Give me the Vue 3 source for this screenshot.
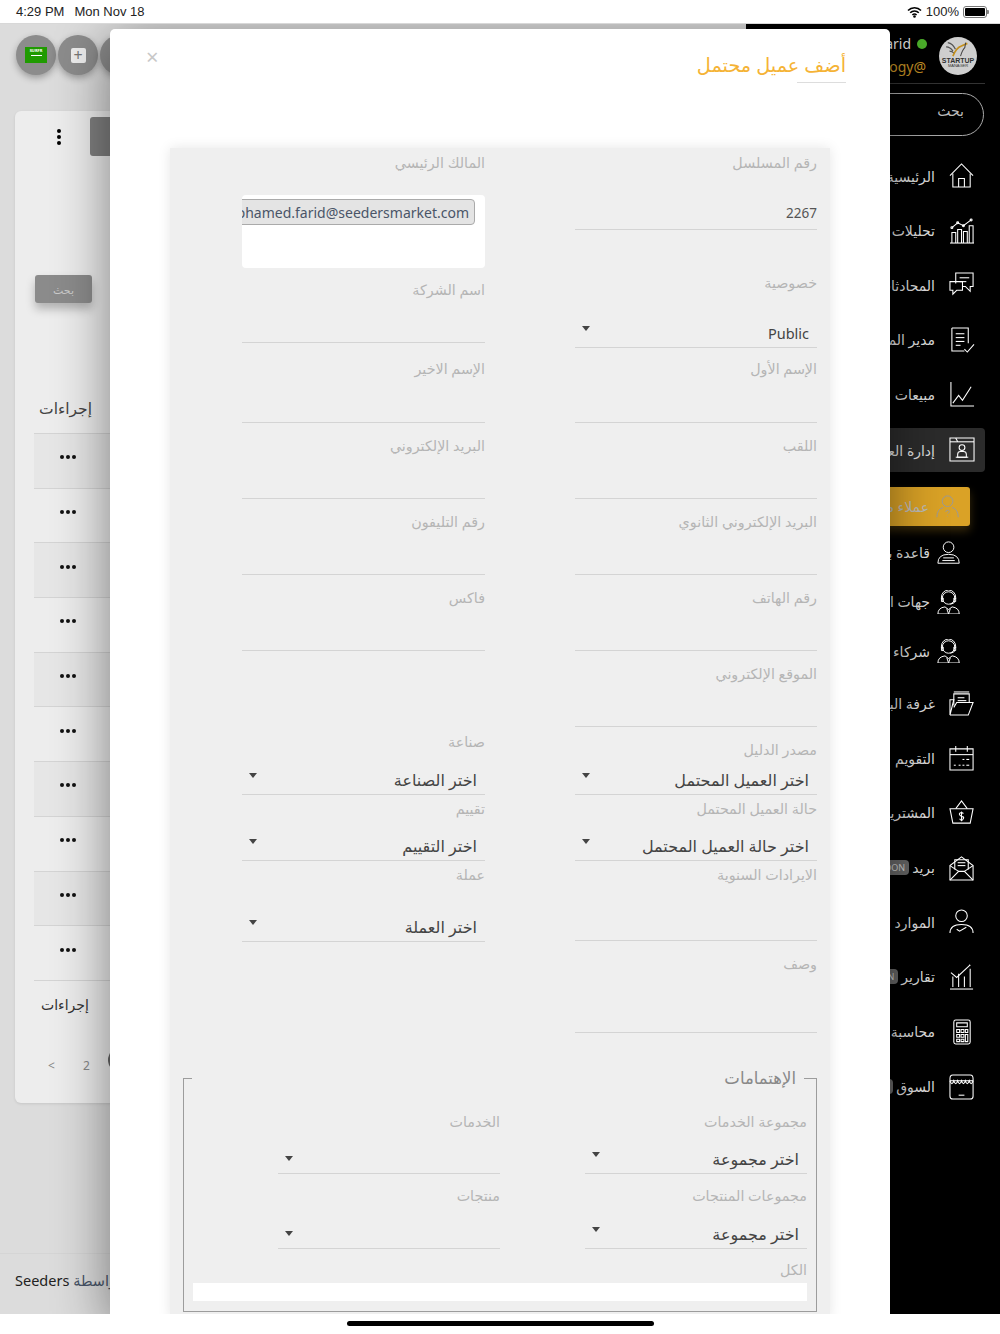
<script setup>
const icons = {
  home: ['M1 13 13 1l12 12', 'M4 11v14h18V11', 'M10 25v-9h6v9'],
  analytics: ['M1 26h25', 'M3 26V15h4v11', 'M9 26V12h4v14', 'M15 26V14h4v12', 'M21 26V8h4v18', 'M3 10l6-5 6 3 8-6', 'M4 10a1 1 0 1 1-2 0a1 1 0 1 1 2 0', 'M10 5a1 1 0 1 1-2 0a1 1 0 1 1 2 0', 'M16 8a1 1 0 1 1-2 0a1 1 0 1 1 2 0', 'M24 2a1 1 0 1 1-2 0a1 1 0 1 1 2 0'],
  chat: ['M7 12V1h18v14h-3v5l-5-5h-3', 'M11 6h10', 'M11 10h7', 'M1 10h13v9H8l-4 4v-4H1z'],
  doc: ['M3 1h17v16', 'M3 1v24h13', 'M7 7h9', 'M7 11h9', 'M7 15h9', 'M7 19h5', 'M16 23l3 3 7-8'],
  chart: ['M2 0v25h24', 'M4 22l6-8 4 5 9-14'],
  crm: ['M1 1h25v24H1z', 'M1 5h25', 'M7 1l2 4', 'M16.500 11a3 3 0 1 1-6 0a3 3 0 1 1 6 0', 'M9 21v-3q0-3 3-3h3q3 0 3 3v3z', 'M7 21h13'],
  personQ: ['M19 7a6 6 0 1 1-12 0a6 6 0 1 1 12 0', 'M1 25q0-9 7-11', 'M25 25q0-9-7-11', 'M11 19q0-2 2-2t2 1.500-2 2.500', 'M13 24v.5'],
  personL: ['M19 7a6 6 0 1 1-12 0a6 6 0 1 1 12 0', 'M1 25q0-10 12-10t12 10z', 'M7 19h12', 'M6 22h14'],
  agent: ['M20 9a7 7 0 1 1-14 0a7 7 0 1 1 14 0', 'M5 10V8a8 8 0 0 1 16 0v2', 'M5 9h2v4H5z', 'M19 9h2v4h-2z', 'M20 13q0 2-5 3', 'M1 27q0-7 8-8l4 3 4-3q8 1 8 8z', 'M11 21l2 6 2-6'],
  folder: ['M5 15V3h16v9', 'M1 25 5 9H1v16', 'M9 7h7', 'M9 10h9', 'M1 25h19l5-13H8l-3 5', 'M5 1h16'],
  calendar: ['M1 4h24v22H1z', 'M1 10h24', 'M7 1v6', 'M19 1v6', 'M14 15h2', 'M18 15h3', 'M5 21h2', 'M10 21h2', 'M14 21h2', 'M18 21h3'],
  basket: ['M1 9h24l-3 15H4z', 'M7 9l6-8 6 8', 'M15 14q-2-1.500-3.500-.5t0 2.500 3 1.500 0 2.500-3.500-.5', 'M13 12v10'],
  mail: ['M1 11v15h24V11L13 2z', 'M6 15V5h14v10', 'M9 8h8', 'M9 11h8', 'M1 26l9-9h6l9 9', 'M1 11l9 6', 'M25 11l-9 6'],
  hr: ['M19 7a6 6 0 1 1-12 0a6 6 0 1 1 12 0', 'M1 25q0-9 12-9t12 9', 'M8 21l3 2 7-4'],
  reports: ['M1 26h24', 'M4 24V13', 'M10 24V10', 'M16 24V13', 'M22 24V5', 'M2 9l6 5 14-13', 'M22 1l-1 .5'],
  calc: ['M7 1h13q2 0 2 2v21q0 2-2 2H7q-2 0-2-2V3q0-2 2-2z', 'M8 4h11v4H8z', 'M8 11h3v3H8z', 'M12.500 11h3v3h-3z', 'M17 11h2.500v3H17z', 'M8 16h3v3H8z', 'M12.500 16h3v3h-3z', 'M8 21h3v2.500H8z', 'M12.500 21h3v2.500h-3z', 'M17 16h2.500v7.500H17z'],
  shop: ['M4 1h18q3 0 3 4v18q0 3-3 3H4q-3 0-3-3V5q0-4 3-4z', 'M1 7h24', 'M1 7q2 6 4 0q2 6 4 0q2 6 4 0q2 6 4 0q2 6 4 0q2 6 4 0', 'M10 22h6']
}
const menu = [
  { t: 'الرئيسية', i: 'home', h: 54 },
  { t: 'تحليلات الأعمال', i: 'analytics', h: 55 },
  { t: 'المحادثات', i: 'chat', h: 54 },
  { t: 'مدير المهام', i: 'doc', h: 55 },
  { t: 'مبيعات', i: 'chart', h: 55 },
  { t: 'إدارة العملاء', i: 'crm', h: 54, active: true },
  { t: 'عملاء محتملين', i: 'personQ', h: 44, sub: true, current: true },
  { t: 'قاعدة بيانات', i: 'personL', h: 49, sub: true },
  { t: 'جهات الاتصال', i: 'agent', h: 49, sub: true },
  { t: 'شركاء', i: 'agent', h: 50, sub: true },
  { t: 'غرفة البيانات', i: 'folder', h: 55 },
  { t: 'التقويم', i: 'calendar', h: 54 },
  { t: 'المشتريات', i: 'basket', h: 55 },
  { t: 'بريد', i: 'mail', h: 55, badge: 'SOON' },
  { t: 'الموارد البشرية', i: 'hr', h: 54 },
  { t: 'تقارير', i: 'reports', h: 55, badge: 'SOON' },
  { t: 'محاسبة', i: 'calc', h: 55 },
  { t: 'السوق', i: 'shop', h: 55, badge: 'SOON' }
]
const rows = Array.from({ length: 10 }, (_, i) => i)
const rightFields = [
  { label: 'رقم المسلسل', value: '2267', latin: true, h: 76, mb: 44 },
  { label: 'خصوصية', value: 'Public', latin: true, select: true, h: 74, mb: 12 },
  { label: 'الإسم الأول', h: 63, mb: 14 },
  { label: 'اللقب', h: 62, mb: 14 },
  { label: 'البريد الإلكتروني الثانوي', h: 62, mb: 14 },
  { label: 'رقم الهاتف', h: 62, mb: 14 },
  { label: 'الموقع الإلكتروني', h: 62, mb: 14 },
  { label: 'مصدر الدليل', value: 'اختر العميل المحتمل', select: true, h: 54, mb: 5 },
  { label: 'حالة العميل المحتمل', value: 'اختر حالة العميل المحتمل', select: true, h: 61, mb: 5 },
  { label: 'الايرادات السنوية', h: 75, mb: 14 },
  { label: 'وصف', h: 78, mb: 0 }
]
const leftFields = [
  { label: 'المالك الرئيسي', owner: true, h: 114, mb: 13 },
  { label: 'اسم الشركة', h: 62, mb: 17 },
  { label: 'الإسم الاخير', h: 63, mb: 14 },
  { label: 'البريد الإلكتروني', h: 62, mb: 14 },
  { label: 'رقم التليفون', h: 62, mb: 14 },
  { label: 'فاكس', h: 62, mb: 82 },
  { label: 'صناعة', value: 'اختر الصناعة', select: true, h: 62, mb: 5 },
  { label: 'تقييم', value: 'اختر التقييم', select: true, h: 61, mb: 5 },
  { label: 'عملة', value: 'اختر العملة', select: true, h: 76, mb: 0 }
]
const innerRight = [
  { label: 'مجموعة الخدمات', value: 'اختر مجموعة', h: 61, mb: 13 },
  { label: 'مجموعات المنتجات', value: 'اختر مجموعة', h: 62, mb: 12 }
]
const innerLeft = [
  { label: 'الخدمات', value: '', h: 61, mb: 13 },
  { label: 'منتجات', value: '', h: 62, mb: 12 }
]
</script>

<template>
  <div class="screen">
    <header class="status">
      <div class="status-left"><span>4:29 PM</span><span>Mon Nov 18</span></div>
      <div class="status-right">
        <svg width="15" height="12" viewBox="0 0 15 12"><path d="M1 4.500a9 9 0 0 1 13 0M3.200 6.800a6 6 0 0 1 8.600 0M5.400 9a3 3 0 0 1 4.200 0" fill="none" stroke="#000" stroke-width="1.600"/><circle cx="7.500" cy="10.500" r="1.300"/></svg>
        <span>100%</span>
        <span class="battery"><i></i></span>
      </div>
    </header>

    <main class="main">
      <section class="page">
        <div class="round-row">
          <div class="round"><span class="flag"><b>SURFR</b><i></i></span></div>
          <div class="round"><span class="plus">+</span></div>
          <div class="round"></div>
        </div>
        <div class="card">
          <div class="card-top">
            <span class="kebab"><i></i><i></i><i></i></span>
            <span class="gray-tab"></span>
          </div>
          <button class="search-btn">بحث</button>
          <div class="th">إجراءات</div>
          <div v-for="r in rows" :key="r" class="row" :class="{ odd: r % 2 === 0 }"><i></i><i></i><i></i></div>
          <div class="tf">إجراءات</div>
          <div class="pager"><span>&lt;</span><span>2</span><span class="page-dot"></span></div>
        </div>
        <footer class="foot"><span class="foot-en">Seeders</span> <span class="foot-ar">بواسطة</span></footer>
      </section>

      <aside class="side">
        <div class="user">
          <div class="user-text">
            <div class="user-name"><span>Mohamed Farid</span><i class="online"></i></div>
            <div class="user-mail">Seeders Technology@</div>
          </div>
          <div class="avatar">
            <svg viewBox="0 0 30 20"><path d="M3 3q6 1 9 8M1 8q5 0 8 5M5 13q3 0 6 3" fill="none" stroke="#555" stroke-width="1.500"/><path d="M9 19q4-10 10-12l7-3" fill="none" stroke="#c4901d" stroke-width="2"/><path d="M18 19q2-7 5-10l1-6" fill="none" stroke="#444" stroke-width="1.200"/></svg>
            <b>STARTUP</b><em>MANAGER</em>
          </div>
        </div>
        <div class="side-search"><span>بحث</span></div>
        <nav class="menu">
          <div v-for="m in menu" :key="m.t" class="item" :class="{ sub: m.sub, active: m.active, current: m.current }" :style="{ height: m.h + 'px' }">
            <svg class="ico" viewBox="0 0 27 27" fill="none"><path v-for="d in icons[m.i]" :key="d" :d="d"/></svg>
            <span class="item-text">{{ m.t }}</span>
            <span v-if="m.badge" class="badge">{{ m.badge }}</span>
          </div>
        </nav>
      </aside>

      <div class="modal">
        <div class="modal-head">
          <h2 class="title">أضف عميل محتمل</h2>
          <span class="close">×</span>
        </div>
        <div class="panel">
          <div class="cols">
            <div class="col col-right">
              <div v-for="f in rightFields" :key="f.label" class="field" :class="{ 'is-select': f.select, latin: f.latin }" :style="{ height: f.h + 'px', marginBottom: f.mb + 'px' }">
                <label>{{ f.label }}</label>
                <div class="control"><span>{{ f.value }}</span><i v-if="f.select" class="caret"></i></div>
              </div>
            </div>
            <div class="col col-left">
              <div v-for="f in leftFields" :key="f.label" class="field" :class="{ 'is-select': f.select, 'is-owner': f.owner }" :style="{ height: f.h + 'px', marginBottom: f.mb + 'px' }">
                <label>{{ f.label }}</label>
                <div v-if="f.owner" class="owner"><span class="chip">mohamed.farid@seedersmarket.com</span></div>
                <div v-else class="control"><span>{{ f.value }}</span><i v-if="f.select" class="caret"></i></div>
              </div>
            </div>
          </div>
          <fieldset class="interests">
            <legend>الإهتمامات</legend>
            <div class="inner-cols">
              <div class="inner-right">
                <div v-for="f in innerRight" :key="f.label" class="field is-select" :style="{ height: f.h + 'px', marginBottom: f.mb + 'px' }">
                  <label>{{ f.label }}</label>
                  <div class="control"><span>{{ f.value }}</span><i class="caret"></i></div>
                </div>
              </div>
              <div class="inner-left">
                <div v-for="f in innerLeft" :key="f.label" class="field is-select" :style="{ height: f.h + 'px', marginBottom: f.mb + 'px' }">
                  <label>{{ f.label }}</label>
                  <div class="control"><span>{{ f.value }}</span><i class="caret"></i></div>
                </div>
              </div>
            </div>
            <label class="all-label">الكل</label>
            <div class="all-box"></div>
          </fieldset>
        </div>
      </div>
    </main>

    <div class="home-zone"><span class="home-bar"></span></div>
  </div>
</template>

<style scoped>
* { box-sizing: border-box; }
.screen { width: 1000px; height: 1334px; display: flex; flex-direction: column; background: #fff; overflow: hidden; font-family: "Noto Sans", "Open Sans", "DejaVu Sans", sans-serif; }
.status { height: 24px; flex: none; display: flex; justify-content: space-between; align-items: center; padding: 0 13px 0 16px; font-family: "Liberation Sans", sans-serif; font-size: 13px; color: #222; border-bottom: 1px solid #d8d8d8; }
.status-left { display: flex; gap: 10px; }
.status-right { display: flex; align-items: center; gap: 4px; }
.battery { width: 24px; height: 12px; border: 1px solid #777; border-radius: 3px; padding: 1px; display: block; position: relative; }
.battery::after { content: ""; position: absolute; right: -3px; top: 3px; width: 2px; height: 4px; background: #888; border-radius: 0 1px 1px 0; }
.battery i { display: block; height: 100%; background: #000; border-radius: 1px; }
.main { position: relative; flex: none; height: 1290px; display: flex; overflow: hidden; background: #000; }
.page { width: 746px; flex: none; background: #dcdcdc; display: flex; flex-direction: column; padding: 11px 0 0 15px; }
.round-row { display: flex; gap: 2px; height: 76px; flex: none; padding-left: 1px; }
.round { width: 40px; height: 40px; border-radius: 50%; background: #8c8c8c; box-shadow: 0 3px 7px rgba(0,0,0,.3); display: flex; align-items: center; justify-content: center; }
.flag { width: 22px; height: 16px; background: #1f9b00; color: #fff; display: flex; flex-direction: column; align-items: center; font-size: 4px; line-height: 7px; }
.flag b { font-weight: 700; }
.flag i { width: 11px; height: 1px; background: #fff; margin-top: 1px; }
.plus { width: 15px; height: 15px; background: #eee; border-radius: 2px; color: #777; display: flex; align-items: center; justify-content: center; font-size: 16px; line-height: 1; }
.card { width: 700px; height: 992px; flex: none; background: #ededed; border-radius: 6px; padding: 6px 0 0 19px; box-shadow: 0 1px 3px rgba(0,0,0,.1); }
.card-top { display: flex; height: 39px; }
.kebab { width: 50px; display: flex; flex-direction: column; align-items: center; justify-content: center; gap: 2px; }
.kebab i { width: 4px; height: 4px; border-radius: 50%; background: #000; }
.gray-tab { width: 300px; margin-left: 6px; background: #808080; border-radius: 3px; }
.search-btn { display: block; width: 57px; height: 28px; margin: 119px 0 0 1px; background: #8b8b8b; border: 0; border-radius: 3px; color: #ccc; font: 11px "Noto Sans", "DejaVu Sans", sans-serif; box-shadow: 0 6px 10px rgba(0,0,0,.25); }
.th { height: 130px; width: 58px; padding: 94px 0 0; font-size: 15.500px; color: #444; text-align: right; }
.row { width: 660px; height: 54.700px; border-top: 1px solid #d4d4d4; display: flex; align-items: center; gap: 2px; padding: 0 0 7px 26px; }
.row.odd { background: #e6e6e6; }
.row i { width: 4px; height: 4px; border-radius: 50%; background: #111; }
.tf { border-top: 1px solid #d4d4d4; width: 660px; height: 52px; padding: 14px 0 0 7px; font-size: 14px; color: #333; }
.pager { display: flex; gap: 28px; padding: 25px 0 0 14px; font-size: 12px; color: #888; align-items: center; }
.page-dot { width: 24px; height: 24px; border-radius: 50%; background: #666; margin: -10px 0 0 -10px; flex: none; }
.foot { margin-top: 150px; padding-top: 16px; border-top: 1px solid #d5d5d5; margin-left: -15px; padding-left: 15px; font-size: 14.500px; color: #222; }
.foot-ar { color: #485468; }
.side { width: 254px; flex: none; background: #000; color: #ddd; padding: 0 15px 0 0; }
.user { height: 60px; display: flex; justify-content: flex-end; align-items: center; gap: 12px; padding: 4px 8px 0 0; border-bottom: 1px solid #333; }
.user-text { text-align: right; font-size: 14px; line-height: 22px; white-space: nowrap; }
.user-name { display: flex; align-items: center; justify-content: flex-end; gap: 6px; }
.online { width: 10px; height: 10px; border-radius: 50%; background: #4caf2b; }
.user-mail { color: #c08f25; padding-top: 1px; padding-right: 1px; }
.avatar { width: 38px; height: 38px; border-radius: 50%; background: #cfcfcf; display: flex; flex-direction: column; align-items: center; overflow: hidden; color: #333; padding-top: 3px; flex: none; }
.avatar svg { flex: none; width: 26px; height: 17px; }
.avatar b { font-size: 7px; line-height: 7px; font-family: "Liberation Sans", sans-serif; }
.avatar em { font-size: 4px; line-height: 4px; font-style: normal; font-family: "Liberation Sans", sans-serif; }
.side-search { height: 43px; margin: 9px 1px 0 60px; border: 1px solid #aaa; border-radius: 22px; display: flex; align-items: center; padding: 0 19px 9px 0; justify-content: flex-end; font-size: 14px; color: #bbb; }
.menu { margin-top: 13px; margin-right: -15px; }
.item { display: flex; align-items: center; flex-direction: row-reverse; position: relative; padding-right: 25px; font-size: 14px; color: #ddd; justify-content: flex-start; gap: 14px; }
.item .ico { width: 26px; height: 26px; stroke: #fff; stroke-width: 1.100; flex: none; }
.item.sub { padding-right: 39px; gap: 7px; }
.item.sub .ico { width: 24px; height: 24px; }
.item-text { white-space: nowrap; }
.item.active { background: #2b2b2b; border-radius: 4px; margin: 6px 15px 0 0; padding-right: 10px; height: 44px !important; }
.item.current { height: 39px !important; background: #daa226; margin: 15px 30px 2px 0; border-radius: 3px; padding-right: 10px; color: #bbb; box-shadow: 0 5px 10px rgba(218,162,38,.25); }
.item.current .ico { stroke: #999; }
.badge { background: #666; color: #ccc; font-size: 9px; border-radius: 4px; padding: 1px 4px; margin-right: -11px; }
.modal { position: absolute; left: 110px; top: 5px; width: 780px; height: 1290px; background: #fff; border-radius: 5px 5px 0 0; box-shadow: 0 10px 55px rgba(0,0,0,.48); display: flex; flex-direction: column; }
.modal-head { height: 119px; flex: none; display: flex; flex-direction: row-reverse; justify-content: space-between; padding: 0 44px 0 36px; }
.title { margin: 23px 0 0; height: 29px; font-size: 19.300px; line-height: 26px; font-weight: 400; color: #f5b335; position: relative; }
.title::after { content: ""; position: absolute; right: 0; bottom: -2px; width: 49px; height: 1px; background: #ddd; }
.close { font-size: 22px; color: #c8c8c8; line-height: 1; margin-top: 16px; }
.panel { flex: 1; margin: 0 60px; background: #efefef; box-shadow: 0 0 12px rgba(0,0,0,.1); padding: 6px 13px 0; min-height: 0; }
.cols { display: flex; flex-direction: row-reverse; justify-content: space-between; padding: 0 0 0 59px; height: 914px; }
.col { width: 243px; }
.col-right { width: 242px; }
.field { display: flex; flex-direction: column; }
.field label, .all-label { display: block; font-size: 14.300px; line-height: 18px; color: #b5b5b5; text-align: right; flex: none; }
.control { margin-top: auto; position: relative; border-bottom: 1px solid #d4d4d4; text-align: right; font-size: 13.500px; line-height: 22px; color: #555; padding-bottom: 5px; min-height: 22px; }
.is-select .control { padding: 0 8px 3px 0; font-size: 16px; color: #444; }
.latin.is-select .control { font-size: 14.500px; }
.caret { position: absolute; left: 7px; top: 4px; width: 0; height: 0; border: 4px solid transparent; border-top: 5px solid #444; border-bottom: 0; }
.owner { margin-top: auto; height: 73px; background: #fff; border-radius: 4px; padding: 4px 10px 0 0; overflow: hidden; display: flex; justify-content: flex-end; }
.chip { height: 26px; flex: none; background: #e4e4e4; border: 1px solid #aaa; border-radius: 4px; padding: 0 5px; font-size: 14px; line-height: 26px; color: #4a5568; white-space: nowrap; }
.interests { margin: 0; padding: 0 9px; border: 1px solid #9c9c9c; height: 244px; display: block; min-width: 0; position: relative; }
.interests legend { width: calc(100% - 2px); margin: 0 3px 0 0; padding: 0 8px 0 0; font-size: 16.500px; color: #888; text-align: right; line-height: 20px; }
.inner-cols { display: flex; flex-direction: row-reverse; justify-content: space-between; padding: 25px 0 0 85px; }
.inner-right { width: 222px; }
.inner-left { width: 222px; }
.all-label { margin-top: 0; }
.all-box { height: 18px; margin: 4px 0 0; background: #fff; }
.home-zone { flex: 1; display: flex; justify-content: center; align-items: flex-end; padding-bottom: 8px; }
.home-bar { width: 307px; height: 5px; border-radius: 3px; background: #000; }
</style>
